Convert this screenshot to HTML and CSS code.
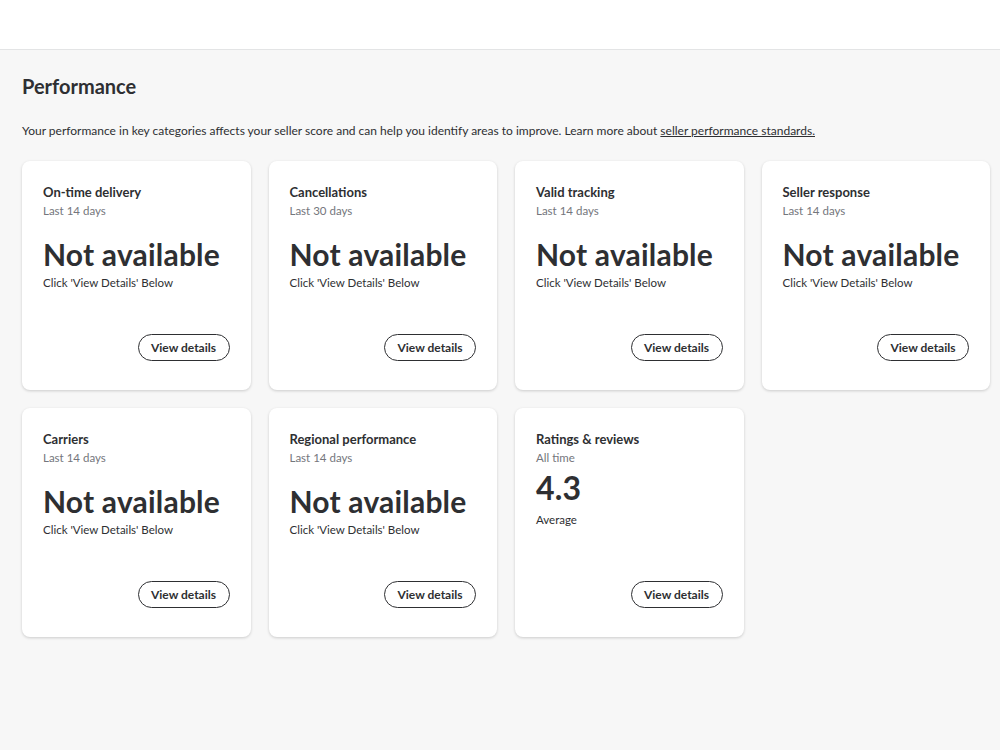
FILE: index.html
```html
<!DOCTYPE html>
<html lang="en">
<head>
  <meta charset="UTF-8">
  <meta name="viewport" content="width=device-width, initial-scale=1.0">
  <title>Performance</title>
  <link rel="stylesheet" href="styles.css">
</head>

<body>
  <header class="topbar"></header>

  <main class="page">
    <h1>Performance</h1>
    <p class="intro">Your performance in key categories affects your seller score and can help you identify areas to improve. Learn more about <a href="#">seller performance standards.</a></p>

    <div class="cards">
      <div class="card">
        <div class="card-title">On-time delivery</div>
        <div class="card-period">Last 14 days</div>
        <div class="card-value">Not available</div>
        <div class="card-note">Click 'View Details' Below</div>
        <div class="card-actions"><button class="btn">View details</button></div>
      </div>
      <div class="card">
        <div class="card-title">Cancellations</div>
        <div class="card-period">Last 30 days</div>
        <div class="card-value">Not available</div>
        <div class="card-note">Click 'View Details' Below</div>
        <div class="card-actions"><button class="btn">View details</button></div>
      </div>
      <div class="card">
        <div class="card-title">Valid tracking</div>
        <div class="card-period">Last 14 days</div>
        <div class="card-value">Not available</div>
        <div class="card-note">Click 'View Details' Below</div>
        <div class="card-actions"><button class="btn">View details</button></div>
      </div>
      <div class="card">
        <div class="card-title">Seller response</div>
        <div class="card-period">Last 14 days</div>
        <div class="card-value">Not available</div>
        <div class="card-note">Click 'View Details' Below</div>
        <div class="card-actions"><button class="btn">View details</button></div>
      </div>
      <div class="card">
        <div class="card-title">Carriers</div>
        <div class="card-period">Last 14 days</div>
        <div class="card-value">Not available</div>
        <div class="card-note">Click 'View Details' Below</div>
        <div class="card-actions"><button class="btn">View details</button></div>
      </div>
      <div class="card">
        <div class="card-title">Regional performance</div>
        <div class="card-period">Last 14 days</div>
        <div class="card-value">Not available</div>
        <div class="card-note">Click 'View Details' Below</div>
        <div class="card-actions"><button class="btn">View details</button></div>
      </div>
      <div class="card">
        <div class="card-title">Ratings &amp; reviews</div>
        <div class="card-period">All time</div>
        <div class="card-value rating">4.3</div>
        <div class="card-note">Average</div>
        <div class="card-actions"><button class="btn">View details</button></div>
      </div>
    </div>
  </main>
</body>
</html>
```

FILE: styles.css
```css
body {
  margin: 0;
  font-family: Lato, "Noto Sans", sans-serif;
  color: #2e2f32;
  background-color: #f7f7f7;
  min-height: 750px;
}

.topbar {
  height: 49px;
  background-color: #fff;
  border-bottom: 1px solid #e3e4e5;
}

.page {
  padding: 23px 10px 40px 22px;
}

h1 {
  margin: 0;
  font-size: 20px;
  font-weight: 700;
  line-height: 26px;
}

.intro {
  margin: 24px 0 22px;
  font-size: 12px;
  line-height: 16px;
}

.intro a {
  color: #2e2f32;
  text-decoration: underline;
}

.cards {
  display: grid;
  grid-template-columns: repeat(4, 1fr);
  gap: 18px;
}

.card {
  background-color: #fff;
  border-radius: 8px;
  box-shadow: 0 1px 3px rgba(0, 0, 0, 0.18);
  height: 229px;
  box-sizing: border-box;
  padding: 23px 21px 29px;
  display: flex;
  flex-direction: column;
}

.card-title {
  font-size: 13px;
  font-weight: 700;
  line-height: 17px;
}

.card-period {
  font-size: 11.5px;
  color: #74767c;
  line-height: 17px;
  margin-top: 1px;
}

.card-value {
  font-size: 30px;
  font-weight: 700;
  line-height: 36px;
  margin-top: 17px;
  letter-spacing: 0.2px;
}

.card-value.rating {
  margin-top: 4px;
  font-size: 32px;
}

.card-note {
  font-size: 11.5px;
  line-height: 16px;
  margin-top: 3px;
}

.rating + .card-note {
  margin-top: 6px;
}

.card-actions {
  margin-top: auto;
  display: flex;
  justify-content: flex-end;
}

.btn {
  font-family: inherit;
  font-size: 12px;
  font-weight: 700;
  color: #2e2f32;
  background-color: #fff;
  border: 1px solid #2e2f32;
  border-radius: 14px;
  height: 27px;
  width: 92px;
  padding: 0;
  cursor: pointer;
}
```
